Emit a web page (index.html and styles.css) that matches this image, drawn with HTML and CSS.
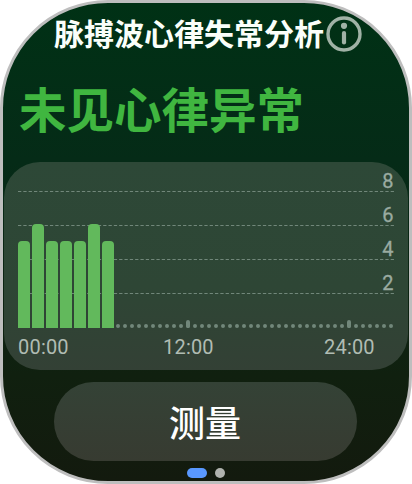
FILE: index.html
```html
<!DOCTYPE html>
<html lang="zh-CN">
<head>
<meta charset="utf-8">
<title>脉搏波心律失常分析</title>
<link rel="stylesheet" href="styles.css">
</head>
<body>
<main class="watch">
  <header class="top">
    <h1>脉搏波心律失常分析</h1>
    <svg class="info" viewBox="0 0 36 36"><circle cx="18" cy="18" r="16" fill="none" stroke="currentColor" stroke-width="3.4"/><circle cx="18" cy="9.8" r="3.1" fill="currentColor"/><path d="M18 17V26.5" stroke="currentColor" stroke-width="4.2" stroke-linecap="round"/></svg>
  </header>
  <h2>未见心律异常</h2>
  <section class="card">
    <svg class="chart" viewBox="0 0 376 166">
      <g class="grid"><path d="M0 29.5H376M0 63.5H376M0 97.5H376M0 131.5H376"/></g>
      <g class="bars">
        <path d="M0 166V83q0-4 4-4h4q4 0 4 4v83z"/>
        <path d="M14 166V66q0-4 4-4h4q4 0 4 4v100z"/>
        <path d="M28 166V83q0-4 4-4h4q4 0 4 4v83z"/>
        <path d="M42 166V83q0-4 4-4h4q4 0 4 4v83z"/>
        <path d="M56 166V83q0-4 4-4h4q4 0 4 4v83z"/>
        <path d="M70 166V66q0-4 4-4h4q4 0 4 4v100z"/>
        <path d="M84 166V83q0-4 4-4h4q4 0 4 4v83z"/>
      </g>
      <path class="dots" d="M100 164H374"/>
      <path class="ticks" d="M170 160V164M331 160V164"/>
      <g class="scale"><text x="375.5" y="25.5">8</text><text x="375.5" y="59.5">6</text><text x="375.5" y="93.5">4</text><text x="375.5" y="127.5">2</text></g>
    </svg>
    <div class="times"><span>00:00</span><span>12:00</span><span>24:00</span></div>
  </section>
  <button class="measure">测量</button>
  <nav class="pages"><i class="current"></i><i></i></nav>
</main>
</body>
</html>
```
FILE: styles.css
```css
* { box-sizing: border-box; }
body { margin: 0; background: #fff; font-family: "Noto Sans CJK SC", sans-serif; }
.watch {
  width: 412px; height: 484px; padding: 0 1px;
  border: 3px solid #bebebe; border-radius: 108px;
  background: linear-gradient(#003115, #052b17 33%, #10200f 78%, #131a0e);
  overflow: hidden;
  display: flex; flex-direction: column;
}
.top { display: flex; margin: 12px 0 0 50px; height: 38px; align-items: center; }
h1 { margin: -4px 0 0; font-size: 30px; line-height: 38px; font-weight: 700; color: #fafffa; white-space: nowrap; }
.info { width: 36px; height: 36px; margin-left: 2px; color: #a0b2a6; flex: none; }
h2 { margin: 27px 0 0 15px; font-size: 47.5px; line-height: 56px; height: 56px; font-weight: 700; color: #40b640; white-space: nowrap; }
.card {
  width: 404px; height: 208px; margin-top: 26px; padding: 0 14px; flex: none;
  border-radius: 36px; background: linear-gradient(#2d4837, #2e4635 60%, #334035);
}
.chart { display: block; width: 376px; height: 166px; }
.grid path { fill: none; stroke: #71877a; stroke-width: 1; stroke-dasharray: 3.3 2.024; }
.bars { fill: #62b95c; }
.dots { fill: none; stroke: #71877a; stroke-width: 4; stroke-linecap: round; stroke-dasharray: 0 7; }
.ticks { stroke: #71877a; stroke-width: 4; stroke-linecap: round; }
.scale { fill: #9aaba1; stroke: #9aaba1; stroke-width: .3; font: 400 20px Roboto, sans-serif; text-anchor: end; }
.times { display: grid; grid-template-columns: 145px 161px 1fr; font: 20px/24px Roboto, sans-serif; letter-spacing: .2px; color: #b0bcb3; padding-top: 7px; }
.measure {
  width: 303px; height: 79px; margin: 12px 0 0 50px; padding: 0 1px 0 0; border: 0; flex: none;
  border-radius: 40px; background: linear-gradient(#344236, #373b31);
  color: #fff; font: 500 36px/79px "Noto Sans CJK SC", sans-serif;
}
.pages { display: flex; gap: 8px; margin: 7px 0 0 183px; }
.pages i { width: 10px; height: 10px; border-radius: 5px; background: #b0b3ae; }
.pages .current { width: 20px; background: #5998ff; }
```
